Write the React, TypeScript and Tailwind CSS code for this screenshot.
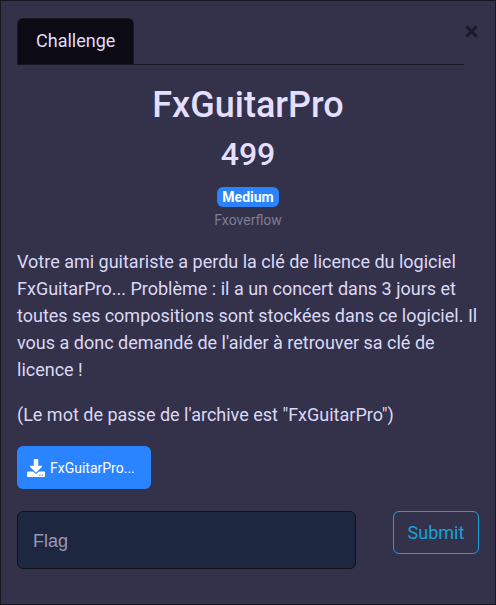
import { useState } from "react";
import { FaDownload } from "react-icons/fa";

function Header() {
  return (
    <header className="flex">
      <nav className="flex grow border-b border-[#181722]" role="tablist">
        <button
          type="button"
          role="tab"
          aria-selected="true"
          className="h-[46px] rounded-t-md border border-b-0 border-[#181722] bg-[#0c0b14] px-[18px] pb-[2px] text-[#e0dcfa]"
        >
          Challenge
        </button>
      </nav>
      <button
        type="button"
        aria-label="Close"
        className="flex h-[26px] w-[15px] items-center justify-center text-[#1c1b29]"
      >
        <svg viewBox="0 0 13 13" className="size-[13px]" aria-hidden="true">
          <path d="M1.4 1.4l10.2 10.2M11.6 1.4l-10.2 10.2" stroke="currentColor" strokeWidth="3.2" fill="none" />
        </svg>
      </button>
    </header>
  );
}

export default function App() {
  const [flag, setFlag] = useState("");

  return (
    <main className="min-h-screen border border-[#181722] bg-[#33324a] px-4 pt-[17px] pb-[35px] font-['Roboto',sans-serif] text-[18px] leading-[27px] text-[#dcd8f6]">
      <Header />

      <section className="flex flex-col items-center pt-[19px] text-center">
        <h2 className="text-[36px] leading-[43px] font-medium text-[#e4dfff]">FxGuitarPro</h2>
        <h3 className="mt-[8px] text-[32px] leading-[38px] font-medium text-[#e4dfff]">499</h3>
        <span className="mt-[14px] rounded-md bg-[#2a84ff] px-[5px] text-[14px] leading-[20px] font-bold text-white">
          Medium
        </span>
        <small className="mt-[2px] text-[14px] leading-[22px] text-[#7d7b96]">Fxoverflow</small>
      </section>

      <section className="mt-[17px] space-y-[18px]">
        <p>
          Votre ami guitariste a perdu la clé de licence du logiciel FxGuitarPro... Problème : il a
          un concert dans 3 jours et toutes ses compositions sont stockées dans ce logiciel. Il vous
          a donc demandé de l'aider à retrouver sa clé de licence !
        </p>
        <p>(Le mot de passe de l'archive est "FxGuitarPro")</p>
      </section>

      <a
        href="#download"
        className="mt-[18px] flex h-[43px] w-[134px] items-center gap-[5px] rounded-md bg-[#2a84ff] pl-[10px] text-white"
      >
        <FaDownload className="size-[18px]" aria-hidden="true" />
        <small className="pt-[2px] text-[14px]">FxGuitarPro...</small>
      </a>

      <form className="mt-[22px] flex items-start gap-[37px]" onSubmit={(e) => e.preventDefault()}>
        <input
          type="text"
          aria-label="Flag"
          placeholder="Flag"
          value={flag}
          onChange={(e) => setFlag(e.target.value)}
          className="h-[58px] min-w-0 grow rounded-md border border-[#11111d] bg-[#1d2840] px-[15px] pt-[2px] font-['Liberation_Sans',sans-serif] text-[#dcd8f6] placeholder:text-[#9a96b8]"
        />
        <button
          type="submit"
          className="h-[43px] w-[86px] rounded-md border border-[#17a2dc] text-[#17a2dc]"
        >
          Submit
        </button>
      </form>
    </main>
  );
}
